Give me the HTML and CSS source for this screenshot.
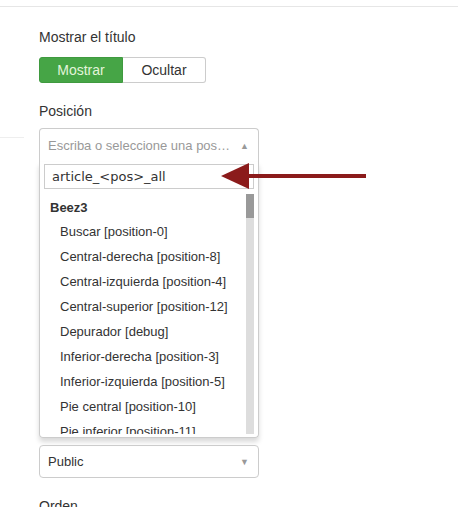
FILE: index.html
```html
<!DOCTYPE html>
<html lang="es">
<head>
    <meta charset="UTF-8">
    <meta name="viewport" content="width=device-width, initial-scale=1.0">
    <title>Módulo - Opciones</title>
    <link rel="stylesheet" href="styles.css">
</head>
<body>

    <div class="topbar"></div>

    <div class="page">
        <div class="sidebar">
            <div class="sidebar-item"></div>
        </div>

        <div class="main">
            <div class="field">
                <div class="label">Mostrar el título</div>
                <div class="btn-group">
                    <button class="btn active">Mostrar</button>
                    <button class="btn">Ocultar</button>
                </div>
            </div>

            <div class="field">
                <div class="label tight">Posición</div>
                <div class="chosen open">
                    <div class="chosen-single">
                        <span class="placeholder">Escriba o seleccione una pos…</span>
                        <span class="caret">▲</span>
                    </div>
                    <div class="chosen-drop">
                        <div class="search">
                            <input type="text" value="article_&lt;pos&gt;_all">
                        </div>
                        <div class="results-wrap">
                            <ul class="results">
                                <li class="group">Beez3</li>
                                <li>Buscar [position-0]</li>
                                <li>Central-derecha [position-8]</li>
                                <li>Central-izquierda [position-4]</li>
                                <li>Central-superior [position-12]</li>
                                <li>Depurador [debug]</li>
                                <li>Inferior-derecha [position-3]</li>
                                <li>Inferior-izquierda [position-5]</li>
                                <li>Pie central [position-10]</li>
                                <li>Pie inferior [position-11]</li>
                            </ul>
                            <div class="scrollbar"><div class="thumb"></div></div>
                        </div>
                    </div>
                </div>

                <div class="chosen">
                    <div class="chosen-single">
                        <span class="value">Public</span>
                        <span class="caret">▼</span>
                    </div>
                </div>
            </div>

            <div class="field">
                <div class="label">Orden</div>
            </div>
        </div>
    </div>

    <!-- annotation arrow -->
    <svg class="arrow" width="150" height="30" viewBox="0 0 150 30">
        <line x1="25" y1="15" x2="145" y2="15" stroke="#8b1b1b" stroke-width="4"/>
        <polygon points="0,15 28,2 28,28" fill="#8b1b1b"/>
    </svg>

</body>
</html>
```

FILE: styles.css
```css
body {
    margin: 0;
    background: #fff;
    font-family: 'Liberation Sans', Arial, sans-serif;
    font-size: 14px;
    color: #333;
}

/* Top border strip */
.topbar {
    height: 6px;
    border-bottom: 1px solid #e6e6e6;
}

.page {
    display: flex;
}

.sidebar {
    width: 24px;
}

.sidebar-item {
    height: 130px;
    border-bottom: 1px solid #eee;
}

.main {
    padding-left: 15px;
    padding-top: 21px;
    width: 220px;
}

.field {
    margin-bottom: 19px;
}

.field + .field {
    margin-top: 1px;
}

.label {
    line-height: 18px;
    margin-bottom: 11px;
}

.label.tight {
    margin-bottom: 8px;
}

/* Toggle buttons */
.btn-group {
    display: flex;
}

.btn {
    font-family: 'Liberation Sans', Arial, sans-serif;
    font-size: 14px;
    line-height: 18px;
    padding: 3px 0;
    width: 84px;
    border: 1px solid #ccc;
    background: #fff;
    color: #333;
    margin: 0;
}

.btn:first-child {
    border-radius: 3px 0 0 3px;
}

.btn:last-child {
    border-radius: 0 3px 3px 0;
    border-left: none;
    width: 83px;
}

.btn.active {
    background: #46a546;
    border-color: #3f9a3f;
    color: #e2f4da;
}

/* Chosen select */
.chosen {
    position: relative;
}

.chosen.open {
    margin-bottom: 7px;
}

.chosen-single {
    height: 31px;
    border: 1px solid #ccc;
    border-radius: 4px;
    display: flex;
    align-items: center;
    justify-content: space-between;
    padding: 0 9px 0 8px;
    font-size: 13px;
}

.chosen.open .chosen-single {
    border-radius: 4px 4px 0 0;
    border-bottom: none;
    height: 33px;
}

.placeholder {
    color: #999;
}

.caret {
    color: #999;
    font-size: 9px;
}

.chosen-drop {
    border: 1px solid #ccc;
    border-top: none;
    border-radius: 0 0 4px 4px;
    box-shadow: 0 4px 5px rgba(0, 0, 0, 0.15);
    padding: 2px 4px 3px 4px;
}

.search input {
    display: block;
    box-sizing: border-box;
    width: 100%;
    height: 25px;
    margin: 0;
    padding: 0 7px;
    border: 1px solid #ccc;
    font-family: 'DejaVu Sans', sans-serif;
    font-size: 13px;
    color: #333;
}

.results-wrap {
    display: flex;
    margin-top: 5px;
    height: 240px;
    overflow: hidden;
}

.results {
    flex: 1;
    list-style: none;
    margin: 0;
    padding: 0;
    font-size: 13px;
}

.results li {
    line-height: 25px;
    padding-left: 16px;
}

.results li.group {
    font-weight: bold;
    padding-left: 6px;
    margin-top: 3px;
    line-height: 22px;
}

.scrollbar {
    width: 8px;
    background: #ddd;
}

.thumb {
    height: 24px;
    background: #999;
}

.value {
    color: #333;
}

/* Red annotation arrow */
.arrow {
    position: absolute;
    left: 221px;
    top: 161px;
}
```
